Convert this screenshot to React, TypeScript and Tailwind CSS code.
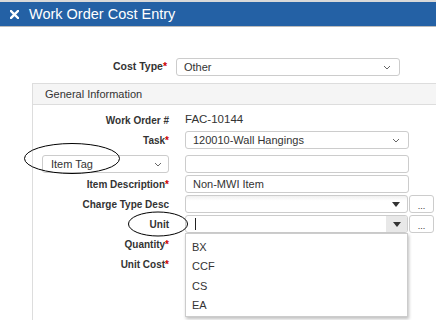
import React from "react";

const Chevron = () => (
  <svg width="8" height="5" viewBox="0 0 8 5" className="shrink-0">
    <polyline points="1,1 4,4 7,1" fill="none" stroke="#666" strokeWidth="1" />
  </svg>
);

const Tri = () => (
  <svg width="8" height="5" viewBox="0 0 8 5">
    <polygon points="0,0 8,0 4,5" fill="#333" />
  </svg>
);

const Req = () => <span className="text-[#cc0000]">*</span>;

function Label({ children }: { children: React.ReactNode }) {
  return (
    <div className="w-[137px] shrink-0 text-right font-bold text-[10px] text-[#333] pr-[1px]">
      {children}
    </div>
  );
}

export default function App() {
  return (
    <div className="w-[436px] h-[320px] bg-white relative overflow-hidden font-['Liberation_Sans',Arial,sans-serif] text-[#333]">
      {/* Header */}
      <div className="h-[27px] bg-[#2461a5] border-t-[2px] border-[#d9d9d9] border-b border-b-[#bbb] flex items-center pl-[10px] text-white">
        <svg width="9" height="9" viewBox="0 0 9 9" className="mr-[10px]">
          <path d="M1 1 L8 8 M8 1 L1 8" stroke="#fff" strokeWidth="2.4" strokeLinecap="square" />
        </svg>
        <span className="text-[14.5px] leading-none">Work Order Cost Entry</span>
      </div>

      {/* Cost Type */}
      <div className="flex items-center mt-[31px] h-[18px]">
        <div className="w-[168px] text-right font-bold text-[10.5px] pr-[1px]">
          Cost Type<Req />
        </div>
        <div className="ml-[8px] w-[224px] h-[18px] border border-[#ccc] rounded-[3px] flex items-center justify-between pl-[7px] pr-[8px] text-[11px]">
          <span>Other</span>
          <Chevron />
        </div>
      </div>

      {/* Panel */}
      <div className="ml-[32px] mt-[7px] border-l border-t border-[#ddd] h-[240px]">
        <div className="h-[21px] bg-[#f5f5f5] border-b border-[#ddd] flex items-center pl-[12px] text-[11px] text-[#333]">
          General Information
        </div>
        <div className="pt-[5px]">
          <div className="flex items-center h-[20px]">
            <Label>Work Order #</Label>
            <div className="ml-[15px] text-[11.5px]">FAC-10144</div>
          </div>
          <div className="flex items-center h-[20px]">
            <Label>
              Task<Req />
            </Label>
            <div className="ml-[15px] w-[224px] h-[18px] border border-[#ccc] rounded-[3px] flex items-center justify-between pl-[7px] pr-[8px] text-[11px]">
              <span>120010-Wall Hangings</span>
              <Chevron />
            </div>
          </div>
          <div className="flex items-center h-[20px] mt-[4px]">
            <div className="w-[137px] shrink-0 pl-[9px] pr-[1px]">
              <div className="h-[18px] border border-[#ccc] rounded-[3px] flex items-center justify-between pl-[8px] pr-[6px] text-[11px]">
                <span>Item Tag</span>
                <Chevron />
              </div>
            </div>
            <div className="ml-[15px] w-[224px] h-[18px] border border-[#ccc] rounded-[3px]" />
          </div>
          <div className="flex items-center h-[20px]">
            <Label>
              Item Description<Req />
            </Label>
            <div className="ml-[15px] w-[224px] h-[18px] border border-[#ccc] rounded-[3px] flex items-center pl-[7px] text-[11px]">
              Non-MWI Item
            </div>
          </div>
          <div className="flex items-center h-[20px]">
            <Label>Charge Type Desc</Label>
            <div className="ml-[15px] w-[223px] h-[18px] border border-[#ccc] rounded-[3px] flex items-center justify-end pr-[7px] bg-[linear-gradient(#f0f0f0,#fff_30%)]">
              <Tri />
            </div>
            <div className="ml-[1px] w-[25px] h-[18px] border border-[#ccc] rounded-[3px] flex items-end justify-center text-[9px] leading-[12px] text-[#333]">
              ...
            </div>
          </div>
          <div className="flex items-center h-[20px]">
            <Label>Unit</Label>
            <div className="ml-[15px] w-[223px] h-[18px] border border-[#ccc] rounded-[3px] flex items-center overflow-hidden">
              <div className="ml-[9px] w-[1px] h-[12px] bg-[#222]" />
              <div className="ml-auto w-[21px] h-full bg-[#e8e8e8] flex items-center justify-center">
                <Tri />
              </div>
            </div>
            <div className="ml-[1px] w-[25px] h-[18px] border border-[#ccc] rounded-[3px] flex items-end justify-center text-[9px] leading-[12px] text-[#333]">
              ...
            </div>
          </div>
          <div className="flex items-center h-[20px]">
            <Label>
              Quantity<Req />
            </Label>
          </div>
          <div className="flex items-center h-[20px]">
            <Label>
              Unit Cost<Req />
            </Label>
          </div>
        </div>
      </div>

      {/* Dropdown list */}
      <div className="absolute left-[185px] top-[233px] w-[223px] h-[84px] bg-white border border-[#ccc] shadow-[1px_2px_3px_rgba(0,0,0,0.25)] pt-[3px] text-[11px] text-[#333]">
        {["BX", "CCF", "CS", "EA"].map((u) => (
          <div key={u} className="h-[19.5px] flex items-center pl-[6px]">
            {u}
          </div>
        ))}
      </div>

      {/* Annotation ellipses */}
      <svg className="absolute left-0 top-0 pointer-events-none" width="436" height="320">
        <ellipse cx="72" cy="158.5" rx="47.5" ry="15" fill="none" stroke="#000" strokeWidth="1" />
        <ellipse cx="158" cy="224" rx="29.5" ry="12" fill="none" stroke="#000" strokeWidth="1" />
      </svg>
    </div>
  );
}
